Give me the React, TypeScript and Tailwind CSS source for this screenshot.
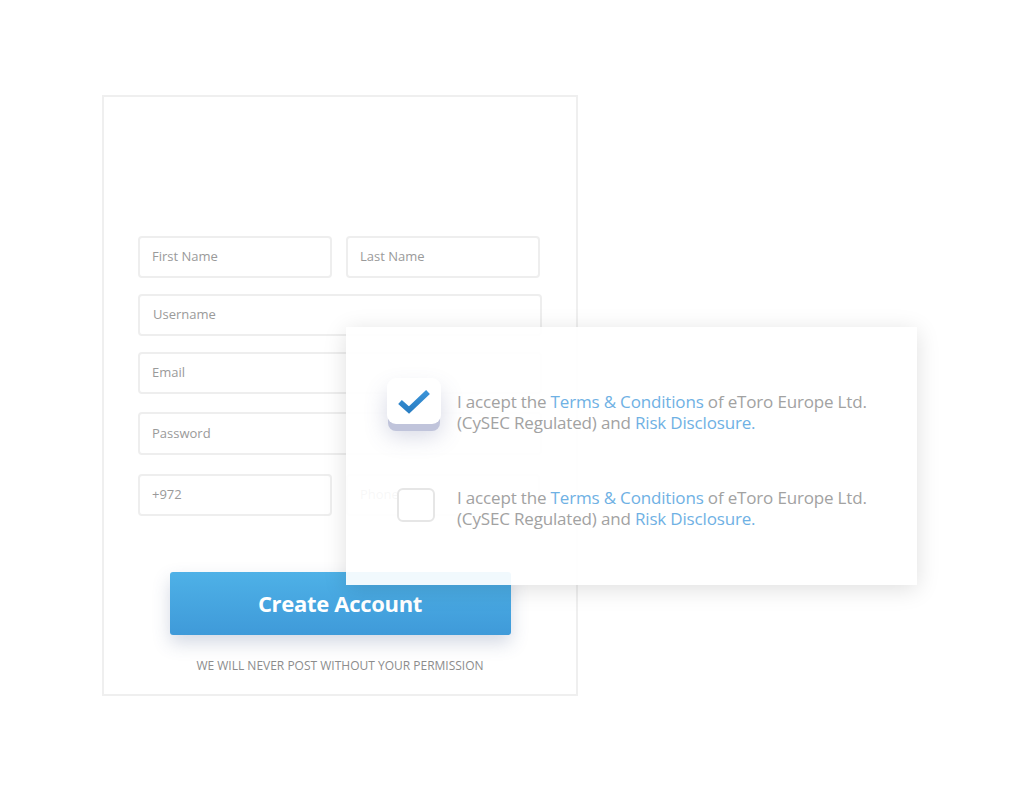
import React from "react";

const font = { fontFamily: '"Open Sans", "Liberation Sans", sans-serif' };

function Field({ label, className = "" }: { label: string; className?: string }) {
  return (
    <div
      className={`h-[42px] rounded-[4px] border-2 border-[#eeeeee] bg-white flex items-center pl-[12px] text-[13px] text-[#9a9a9a] ${className}`}
    >
      {label}
    </div>
  );
}

function Terms() {
  return (
    <p className="text-[17px] leading-[21px] text-[#a2a2a2] tracking-[-0.17px]">
      I accept the <span className="text-[#6fb1e4]">Terms &amp; Conditions</span> of eToro Europe Ltd.
      <br />
      (CySEC Regulated) and <span className="text-[#6fb1e4]">Risk Disclosure.</span>
    </p>
  );
}

export default function App() {
  return (
    <div className="relative w-[1021px] h-[790px] bg-white overflow-hidden" style={font}>
      <div className="absolute left-[102px] top-[95px] w-[476px] h-[601px] border-2 border-[#efefef] bg-white flex flex-col pt-[139px] px-[34px]">
        <div className="flex gap-[14px]">
          <Field label="First Name" className="w-[194px]" />
          <Field label="Last Name" className="w-[194px]" />
        </div>
        <Field label="Username" className="mt-[16px] pl-[13px]" />
        <Field label="Email" className="mt-[16px]" />
        <Field label="Password" className="mt-[18px] h-[43px]" />
        <div className="flex gap-[14px] mt-[19px]">
          <Field label="+972" className="w-[194px]" />
          <Field label="Phone" className="w-[194px]" />
        </div>
        <div className="mt-[56px] mx-auto w-[341px] h-[63px] rounded-[3px] bg-gradient-to-b from-[#4eb1e7] to-[#3f9ad9] shadow-[0_8px_18px_rgba(60,80,130,0.22)] flex items-center justify-center text-white text-[22px] font-bold tracking-[-0.3px]">
          Create Account
        </div>
        <div className="mt-[22px] text-center text-[12px] text-[#8c8c8c] tracking-[0px]">
          WE WILL NEVER POST WITHOUT YOUR PERMISSION
        </div>
      </div>

      <div className="absolute left-[346px] top-[327px] w-[571px] h-[258px] bg-white/[0.92] shadow-[0_4px_22px_rgba(0,0,0,0.13)] flex flex-col">
        <div className="flex items-start mt-[51px]">
          <div className="ml-[41px] w-[54px] h-[46px] rounded-[9px] bg-white shadow-[0_8px_0_-1px_#c0c4db,0_12px_22px_rgba(90,100,150,0.25)] flex items-center justify-center shrink-0">
            <svg width="34" height="26" viewBox="0 0 34 26">
              <defs>
                <linearGradient id="ck" x1="0" y1="0" x2="0" y2="1">
                  <stop offset="0" stopColor="#3a93d8" />
                  <stop offset="1" stopColor="#2a7fc4" />
                </linearGradient>
              </defs>
              <path d="M3 14 L12 22 L31 4" fill="none" stroke="url(#ck)" strokeWidth="5.5" strokeLinecap="butt" strokeLinejoin="miter" />
            </svg>
          </div>
          <div className="ml-[16px] mt-[13px]">
            <Terms />
          </div>
        </div>
        <div className="flex items-start mt-[54px]">
          <div className="ml-[51px] w-[38px] h-[34px] rounded-[6px] border-2 border-[#e6e6e6] bg-white shrink-0 mt-[1px]" />
          <div className="ml-[22px]">
            <Terms />
          </div>
        </div>
      </div>
    </div>
  );
}
